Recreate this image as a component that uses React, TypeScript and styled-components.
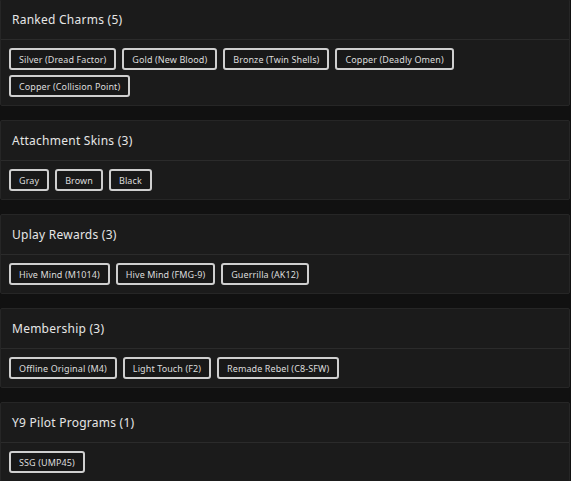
import React from 'react'
import styled, { createGlobalStyle } from 'styled-components'

const GlobalStyle = createGlobalStyle`
    html, body {
        margin: 0;
        padding: 0;
        background-color: #111111;
    }
    body {
        font-family: 'Noto Sans', 'Open Sans', sans-serif;
    }
`

const PageStyle = styled.div`
    display: flex;
    flex-direction: column;
    gap: 14px;
    width: 570px;
    margin-top: -1px;
`

const CardStyle = styled.section`
    background-color: #1b1b1b;
    border: 1px solid #262626;
    border-radius: 2px;
`

const HeaderStyle = styled.div`
    height: 39px;
    display: flex;
    align-items: center;
    padding: 0 11px;
    border-bottom: 1px solid #2b2b2b;
`

const TitleStyle = styled.h2`
    margin: 0;
    font-size: 12px;
    font-weight: 400;
    color: #e6e6e6;
    letter-spacing: 0.25px;
`

const ChipListStyle = styled.div`
    display: flex;
    flex-wrap: wrap;
    gap: 5px 6px;
    padding: 8px;
`

const ChipStyle = styled.span`
    display: inline-flex;
    align-items: center;
    box-sizing: border-box;
    height: 22px;
    padding: 0 8px;
    border: 2px solid #cfcfcf;
    border-radius: 3px;
    background-color: #181818;
    color: #dcdcdc;
    font-size: 9px;
    letter-spacing: 0.1px;
    white-space: nowrap;
`

type TypeCategory = { title: string; items: string[] }

const categories: TypeCategory[] = [
    {
        title: 'Ranked Charms',
        items: [
            'Silver (Dread Factor)',
            'Gold (New Blood)',
            'Bronze (Twin Shells)',
            'Copper (Deadly Omen)',
            'Copper (Collision Point)'
        ]
    },
    { title: 'Attachment Skins', items: ['Gray', 'Brown', 'Black'] },
    { title: 'Uplay Rewards', items: ['Hive Mind (M1014)', 'Hive Mind (FMG-9)', 'Guerrilla (AK12)'] },
    { title: 'Membership', items: ['Offline Original (M4)', 'Light Touch (F2)', 'Remade Rebel (C8-SFW)'] },
    { title: 'Y9 Pilot Programs', items: ['SSG (UMP45)'] }
]

const CategoryCard = ({ title, items }: TypeCategory) => (
    <CardStyle>
        <HeaderStyle>
            <TitleStyle>
                {title} ({items.length})
            </TitleStyle>
        </HeaderStyle>
        <ChipListStyle>
            {items.map((item) => (
                <ChipStyle key={item}>{item}</ChipStyle>
            ))}
        </ChipListStyle>
    </CardStyle>
)

export default function App() {
    return (
        <>
            <GlobalStyle />
            <PageStyle>
                {categories.map((c) => (
                    <CategoryCard key={c.title} {...c} />
                ))}
            </PageStyle>
        </>
    )
}
